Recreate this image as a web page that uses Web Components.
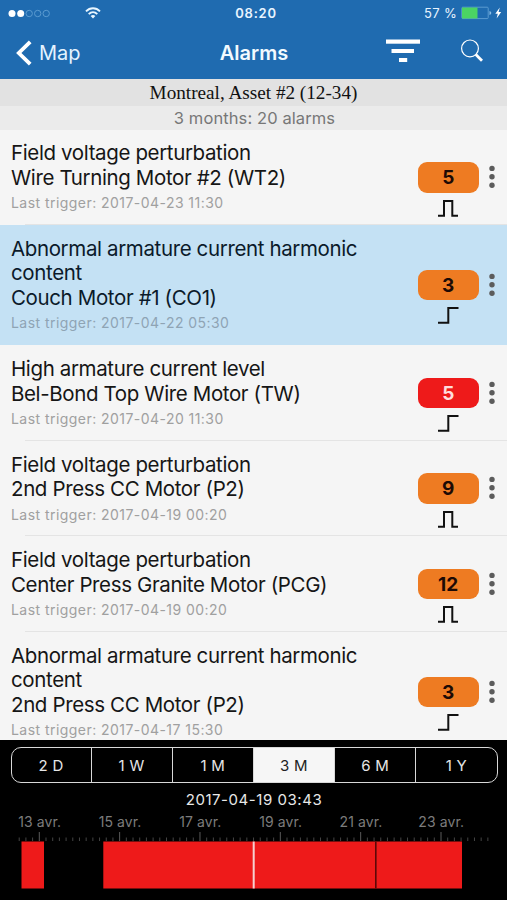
<!DOCTYPE html>
<html lang="en">
<head>
<meta charset="utf-8">
<title>Alarms</title>
<style>
  html, body {
    margin: 0;
    height: 100%;
  }

  body {
    font-family: Inter, "Liberation Sans", sans-serif;
    overflow: hidden;
  }
</style>
</head>
<body>
<alarm-app></alarm-app>

<script>
const ALARMS = [
  { title: 'Field voltage perturbation', asset: 'Wire Turning Motor #2 (WT2)', last: '2017-04-23 11:30', count: 5, shape: 'pulse' },
  { title: 'Abnormal armature current harmonic<br>content', asset: 'Couch Motor #1 (CO1)', last: '2017-04-22 05:30', count: 3, shape: 'step', selected: true },
  { title: 'High armature current level', asset: 'Bel-Bond Top Wire Motor (TW)', last: '2017-04-20 11:30', count: 5, shape: 'step', level: 'high' },
  { title: 'Field voltage perturbation', asset: '2nd Press CC Motor (P2)', last: '2017-04-19 00:20', count: 9, shape: 'pulse' },
  { title: 'Field voltage perturbation', asset: 'Center Press Granite Motor (PCG)', last: '2017-04-19 00:20', count: 12, shape: 'pulse' },
  { title: 'Abnormal armature current harmonic<br>content', asset: '2nd Press CC Motor (P2)', last: '2017-04-17 15:30', count: 3, shape: 'step' }
];

// Status bar: signal, wifi, clock, battery
class StatusBar extends HTMLElement {
  constructor() {
    super();
    this.attachShadow({ mode: 'open' });
    this.shadowRoot.innerHTML = `
      <style>
        :host {
          display: grid;
          grid-template-columns: 1fr auto 1fr;
          align-items: center;
          height: 26px;
          padding: 0 5px 0 8px;
          font-size: 13px;
          color: #e8f4ff;
        }
        svg { display: block; }
        .left, .right { display: flex; align-items: center; }
        .left { gap: 35px; }
        .right { justify-content: flex-end; gap: 4px; letter-spacing: 0.3px; }
        .clock { font-weight: 600; letter-spacing: 0.8px; padding-left: 2px; }
      </style>
      <div class="left">
        <svg width="42" height="9" viewBox="0 0 42 9">
          <circle cx="4" cy="4.5" r="3.5" fill="#fff"/>
          <circle cx="12.7" cy="4.5" r="3.5" fill="#fff"/>
          <g fill="none" stroke="#5b9bd0" stroke-width="1">
            <circle cx="21.2" cy="4.5" r="3.2"/>
            <circle cx="29.7" cy="4.5" r="3.2"/>
            <circle cx="38.2" cy="4.5" r="3.2"/>
          </g>
        </svg>
        <svg width="16" height="12" viewBox="0 0 16 12" fill="none" stroke="#e8f6ff" stroke-width="1.9">
          <path d="M1 4.3C5 .2 11 .2 15 4.3"/>
          <path d="M3.7 7.1C6.2 4.7 9.8 4.7 12.3 7.1"/>
          <path d="M5.6 8.9Q8 6.9 10.4 8.9L8 11.5Z" fill="#e8f6ff" stroke="none"/>
        </svg>
      </div>
      <div class="clock">08:20</div>
      <div class="right">
        <span>57 %</span>
        <svg width="41" height="14" viewBox="0 0 41 14">
          <rect x=".8" y="1.2" width="26.4" height="11.4" rx="1" fill="none" stroke="#5b9bd0"/>
          <rect x="1" y="1.5" width="15.5" height="11" fill="#4bd363"/>
          <path d="M28.5 5v4q1.8-.6 1.8-2t-1.8-2z" fill="#8fc0e6"/>
          <path d="M38.8 1.5L34.3 7.8h2.5L35.6 12.6 40.2 6.1h-2.6z" fill="#fff"/>
        </svg>
      </div>
    `;
  }
}
customElements.define('status-bar', StatusBar);

// Title bar with back link, filter and search icons
class NavBar extends HTMLElement {
  constructor() {
    super();
    this.attachShadow({ mode: 'open' });
    this.shadowRoot.innerHTML = `
      <style>
        :host {
          display: grid;
          grid-template-columns: 1fr auto 1fr;
          align-items: center;
          height: 53px;
          padding: 0 24px 0 16px;
          color: #e4f3ff;
          font-size: 20px;
        }
        svg { display: block; }
        .back { display: flex; align-items: center; gap: 7px; }
        .title { font-weight: 600; color: #f2faff; padding-left: 9px; }
        .actions { display: flex; align-items: center; justify-content: flex-end; gap: 41px; padding-bottom: 4px; }
      </style>
      <div class="back">
        <svg width="16" height="26" viewBox="0 0 16 26">
          <path d="M14.2 1.8L2.8 13 14.2 24.2" fill="none" stroke="#fff" stroke-width="3.8"/>
        </svg>
        <slot name="back"></slot>
      </div>
      <div class="title"><slot></slot></div>
      <div class="actions">
        <svg width="34" height="24" viewBox="0 0 34 24" fill="#fff">
          <rect x="0" y="0.5" width="34" height="4.2"/>
          <rect x="5.5" y="10" width="22.5" height="4"/>
          <rect x="13" y="19" width="8.2" height="4"/>
        </svg>
        <svg width="22" height="23" viewBox="0 0 22 23" fill="none" stroke="#fff">
          <circle cx="9" cy="9.4" r="8.4" stroke-width="1.2"/>
          <path d="M14.8 15.4L21 21.7" stroke-width="2.8"/>
        </svg>
      </div>
    `;
  }
}
customElements.define('nav-bar', NavBar);

// One alarm in the list
class AlarmRow extends HTMLElement {
  constructor() {
    super();
    this.attachShadow({ mode: 'open' });
  }

  connectedCallback() {
    const wave = this.getAttribute('shape') === 'pulse'
      ? 'M0 15.7H6V1H14.3V15.7H20'
      : 'M0 15.7H10.3V1H20.5';

    this.shadowRoot.innerHTML = `
      <style>
        :host {
          display: flex;
          flex: none;
          align-items: center;
          box-sizing: border-box;
          padding: 11.9px 12.3px 12.7px 11px;
          background: linear-gradient(#e4e4e4, #e4e4e4) 25px 100% / 100% 1px no-repeat #f5f5f5;
          color: #161616;
        }
        :host([selected]) { background: #c4e1f4; color: #0b1a2a; }
        .text { flex: 1; font-size: 20.5px; line-height: 24.5px; letter-spacing: -0.37px; white-space: nowrap; }
        .last {
          margin-top: 4px;
          font-size: 14px;
          line-height: 18px;
          letter-spacing: 0.45px;
          color: #a0a0a0;
        }
        :host([selected]) .last { color: #8fa4b4; }
        /* taller than the text of a short row, so it must not stretch it */
        .side { display: flex; flex-direction: column; align-items: center; margin: -12px 0; padding-top: 25px; }
        .badge {
          width: 61px;
          height: 30.5px;
          border-radius: 9px;
          background: #ee7b22;
          color: #1d0a05;
          font-size: 19px;
          font-weight: 700;
          line-height: 31px;
          text-align: center;
        }
        :host([level="high"]) .badge { background: #ee1a1a; color: #ffdcdc; }
        .wave { display: block; margin-top: 7px; }
        .more { display: block; margin-left: 10px; }
      </style>
      <div class="text">
        <slot name="title"></slot><br>
        <slot name="asset"></slot>
        <div class="last">Last trigger: <slot name="last"></slot></div>
      </div>
      <div class="side">
        <div class="badge"><slot name="count"></slot></div>
        <svg class="wave" width="21" height="17" viewBox="0 0 21 17">
          <path d="${wave}" fill="none" stroke="#111" stroke-width="2"/>
        </svg>
      </div>
      <svg class="more" width="6" height="24" viewBox="0 0 6 24" fill="#5c5c5c">
        <circle cx="3" cy="3.4" r="2.7"/>
        <circle cx="3" cy="11.8" r="2.7"/>
        <circle cx="3" cy="20.2" r="2.7"/>
      </svg>
    `;
  }
}
customElements.define('alarm-row', AlarmRow);

// Segmented control for the period
class RangePicker extends HTMLElement {
  constructor() {
    super();
    this.attachShadow({ mode: 'open' });
  }

  connectedCallback() {
    const value = this.getAttribute('value');
    const items = this.getAttribute('options').split(',').map(option => `
      <div class="item ${option === value ? 'active' : ''}">${option}</div>
    `).join('');

    this.shadowRoot.innerHTML = `
      <style>
        :host {
          display: flex;
          box-sizing: border-box;
          height: 36px;
          border: 1.4px solid #d8d8d8;
          border-radius: 10px;
          overflow: hidden;
        }
        .item {
          flex: 1;
          display: flex;
          align-items: center;
          justify-content: center;
          box-sizing: border-box;
          font-size: 15px;
          letter-spacing: 0.3px;
          color: #e6e6e6;
        }
        .item:first-of-type { flex: 0 0 79px; }
        .item + .item { border-left: 1.4px solid #d8d8d8; }
        .item.active { background: #f6f6f6; color: #222; }
      </style>
      ${items}
    `;
  }
}
customElements.define('range-picker', RangePicker);

// Date axis with the periods in alarm under it
class AlarmTimeline extends HTMLElement {
  constructor() {
    super();
    this.attachShadow({ mode: 'open' });
    this.render();
  }

  render() {
    const labels = [13, 15, 17, 19, 21, 23].map(day => `<span>${day} avr.</span>`).join('');

    // a tick every 4 hours, a taller one every 2 days
    let ticks = '';
    for (let i = -3; i <= 67; i++) {
      const x = (39.3 + i * 6.695).toFixed(2);
      ticks += i % 12 === 0
        ? `<path d="M${x} 0V9" stroke="#5a5a5a"/>`
        : `<path d="M${x} 5.5V9" stroke="#444"/>`;
    }

    this.shadowRoot.innerHTML = `
      <style>
        :host { display: block; }
        .labels {
          display: grid;
          grid-template-columns: repeat(6, 80.3px);
          justify-content: center;
          margin-right: 26px;
          height: 20px;
          line-height: 20px;
          font-size: 14px;
          letter-spacing: 0.1px;
          text-align: center;
          color: #7c7c7c;
        }
        svg { display: block; }
      </style>
      <div class="labels">${labels}</div>
      <svg width="507" height="58" viewBox="0 0 507 58">
        ${ticks}
        <g fill="#ee1a1a">
          <rect x="21.5" y="9.5" width="22.5" height="47"/>
          <rect x="103.3" y="9.5" width="358.7" height="47"/>
        </g>
        <rect x="252.7" y="9.5" width="2" height="47" fill="#f6d0d0"/>
        <rect x="375" y="9.5" width="1.6" height="47" fill="#5c0808"/>
      </svg>
    `;
  }
}
customElements.define('alarm-timeline', AlarmTimeline);

class AlarmApp extends HTMLElement {
  constructor() {
    super();
    this.attachShadow({ mode: 'open' });
    this.render();
  }

  render() {
    const rows = ALARMS.map(alarm => `
      <alarm-row shape="${alarm.shape}" ${alarm.selected ? 'selected' : ''} ${alarm.level ? `level="${alarm.level}"` : ''}>
        <span slot="title">${alarm.title}</span>
        <span slot="asset">${alarm.asset}</span>
        <span slot="last">${alarm.last}</span>
        <span slot="count">${alarm.count}</span>
      </alarm-row>
    `).join('');

    this.shadowRoot.innerHTML = `
      <style>
        :host {
          display: flex;
          flex-direction: column;
          width: 507px;
          height: 900px;
          overflow: hidden;
          background: #f5f5f5;
        }
        header { background: #1f6bb0; }
        .place, .summary { text-align: center; }
        .place {
          height: 27px;
          line-height: 28px;
          background: #e2e2e2;
          color: #111;
          font-family: "Liberation Serif", serif;
          font-size: 19.2px;
        }
        .summary {
          height: 23.5px;
          line-height: 24px;
          background: #ebebeb;
          color: #777;
          font-size: 16.5px;
          letter-spacing: 0.1px;
          padding-left: 2px;
        }
        .list { flex: 1; min-height: 0; display: flex; flex-direction: column; overflow: hidden; }
        footer { height: 160px; background: #000; }
        range-picker { margin: 7px 9.5px 0 10.5px; }
        .cursor {
          height: 27px;
          padding-left: 1px;
          line-height: 33px;
          text-align: center;
          font-size: 15px;
          letter-spacing: 0.55px;
          color: #e8e8e8;
        }
        alarm-timeline { margin-top: 1.5px; }
      </style>
      <header>
        <status-bar></status-bar>
        <nav-bar><span slot="back">Map</span>Alarms</nav-bar>
      </header>
      <div class="place">Montreal, Asset #2 (12-34)</div>
      <div class="summary">3 months: 20 alarms</div>
      <div class="list">${rows}</div>
      <footer>
        <range-picker options="2 D,1 W,1 M,3 M,6 M,1 Y" value="3 M"></range-picker>
        <div class="cursor">2017-04-19 03:43</div>
        <alarm-timeline></alarm-timeline>
      </footer>
    `;
  }
}
customElements.define('alarm-app', AlarmApp);
</script>
</body>
</html>
